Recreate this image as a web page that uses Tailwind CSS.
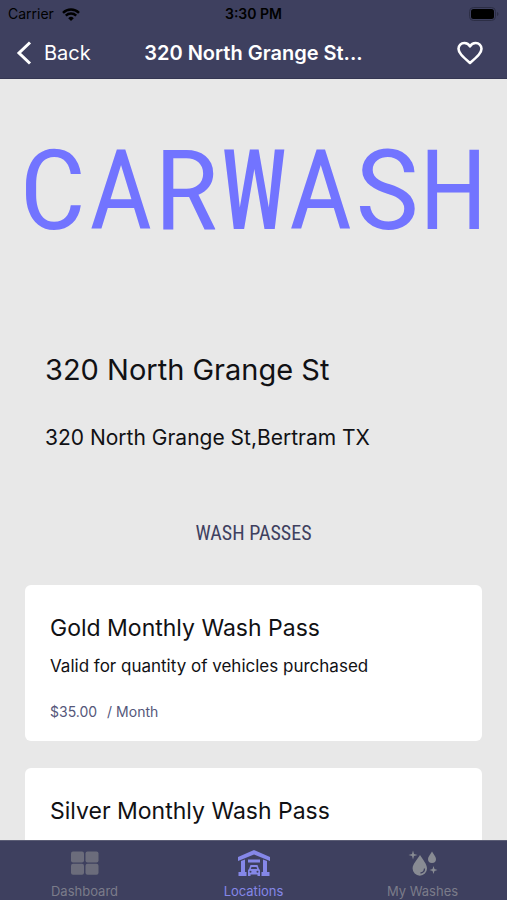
<!DOCTYPE html>
<html lang="en">
<head>
  <meta charset="UTF-8" />
  <meta name="viewport" content="width=device-width, initial-scale=1.0"/>
  <title>320 North Grange St | Carwash</title>
  <script src="https://cdn.jsdelivr.net/npm/@tailwindcss/browser@4"></script>
</head>
<body class="bg-[#e8e8e8] h-screen flex flex-col overflow-hidden font-['Inter',sans-serif] text-[#111114]">

<!-- Header -->
<header class="shrink-0 bg-[#3e405f] border-b border-[#343652]">
  <!-- Status bar -->
  <div class="grid grid-cols-3 items-center h-7 px-2 text-sm text-black">
    <div class="flex items-center gap-2">
      <span>Carrier</span>
      <svg class="w-[18px] h-[13px]" viewBox="0 0 18 13" fill="none" stroke="currentColor" stroke-width="2.4">
        <path d="M1 4.8a11.3 11.3 0 0 1 16 0M3.8 7.6a7.4 7.4 0 0 1 10.4 0" />
        <path d="M9 13L6.2 10.2a4 4 0 0 1 5.6 0z" fill="currentColor" stroke="none" />
      </svg>
    </div>
    <span class="text-center font-semibold">3:30 PM</span>
    <svg class="justify-self-end w-[30px] h-[14px]" viewBox="0 0 30 14">
      <rect x="0.5" y="0.5" width="26" height="13" rx="4" fill="none" stroke="#2c2e45" />
      <rect x="2" y="2" width="23" height="10" rx="2.5" fill="#000" />
      <path d="M28 5v4q1.500-.5 1.500-2t-1.500-2z" fill="#2c2e45" />
    </svg>
  </div>

  <!-- Navigation -->
  <nav class="flex items-center justify-between h-[50px] px-4 text-white">
    <a href="#" class="w-28 flex items-center gap-3 text-xl">
      <svg class="w-4 h-6" viewBox="0 0 16 24" fill="none" stroke="currentColor" stroke-width="3">
        <path d="M14 1.500L3 12l11 10.500" />
      </svg>
      Back
    </a>
    <h1 class="text-xl font-semibold">320 North Grange St...</h1>
    <div class="w-28 flex justify-end pr-2">
      <button type="button" aria-label="Add to favorites">
        <svg class="block w-[26px] h-6" viewBox="0 0 26 24" fill="none" stroke="currentColor" stroke-width="2.600" stroke-linejoin="round">
          <path d="M13 22C5 15 1.500 11.800 1.500 7.800A5.800 5.800 0 0 1 7.400 2C10 2 12 3.500 13 5.300C14 3.500 16 2 18.600 2A5.800 5.800 0 0 1 24.500 7.800C24.500 11.800 21 15 13 22z" />
        </svg>
      </button>
    </div>
  </nav>
</header>

<!-- Location -->
<main class="flex-1 min-h-0 overflow-hidden">
  <div class="pt-13 text-center whitespace-nowrap font-['Roboto_Mono','DejaVu_Sans_Mono',monospace] text-[111px] leading-[110px] text-[#7274ff]">CARWASH</div>

  <section class="mt-[109px] px-[45px]">
    <h2 class="text-[29px] leading-10">320 North Grange St</h2>
    <p class="mt-8 text-[21px] leading-8">320 North Grange St,Bertram TX</p>
  </section>

  <!-- Wash passes -->
  <section class="mt-[63px] px-[25px]">
    <h3 class="text-center font-['Liberation_Sans_Narrow','Roboto_Condensed','Roboto',sans-serif] text-xl leading-8 text-[#3e405f]">WASH PASSES</h3>
    <div class="mt-9 space-y-[27px]">
      <article class="min-h-[156px] px-[25px] pt-[25px] bg-white rounded-md">
        <h4 class="text-[23px] leading-9">Gold Monthly Wash Pass</h4>
        <p class="mt-1.5 text-[17px] leading-7">Valid for quantity of vehicles purchased</p>
        <p class="mt-5 flex gap-2.5 text-sm leading-6 text-[#55577a]"><span>$35.00</span><span>/ Month</span></p>
      </article>
      <article class="min-h-[156px] px-[25px] pt-[25px] bg-white rounded-md">
        <h4 class="text-[23px] leading-9">Silver Monthly Wash Pass</h4>
      </article>
    </div>
  </section>
</main>

<!-- Tab bar -->
<nav class="shrink-0 h-[60px] grid grid-cols-3 bg-[#3e405f] border-t border-[#5b5d75] text-[13px] leading-4 text-[#7b7c8a]">
  <a href="#" class="flex flex-col items-center gap-1.5 pt-2">
    <svg class="w-[30px] h-7" viewBox="0 0 30 28" fill="#6b6c7b">
      <rect x="1" y="2.500" width="13" height="11" rx="2" />
      <rect x="15.500" y="2.500" width="13" height="11" rx="2" />
      <rect x="1" y="14.800" width="13" height="11" rx="2" />
      <rect x="15.500" y="14.800" width="13" height="11" rx="2" />
    </svg>
    Dashboard
  </a>
  <a href="#" class="flex flex-col items-center gap-1.5 pt-2 text-[#8587e8]">
    <svg class="w-[34px] h-7" viewBox="0 0 34 28" fill="currentColor">
      <path d="M17 1L33 8v4L17 5.500L1 12V8z" />
      <path d="M4 12l4-1.500V23h1.500v4H1.500v-4H4zM30 12l-4-1.500V23h-1.500v4h8v-4H30z" />
      <rect x="11" y="10.500" width="12" height="3" />
      <path d="M13.500 16h7l1.500 4q1 .5 1 1.500V27h-2.500v-1.500h-7V27H11v-5.500q0-1 1-1.500zM14.500 18l-.7 2h6.400l-.7-2z" fill-rule="evenodd" />
      <g fill="#3e405f"><circle cx="13.500" cy="22.800" r="1" /><circle cx="20.500" cy="22.800" r="1" /></g>
    </svg>
    Locations
  </a>
  <a href="#" class="flex flex-col items-center gap-1.5 pt-2">
    <svg class="w-[30px] h-7" viewBox="0 0 30 28" fill="#888b93">
      <path d="M12 6C15 11 19 15 19 19.500A7.200 7.200 0 0 1 4.600 19.500C4.600 15 9 11 12 6z" />
      <path d="M24 2.500C25.500 5.500 28 7.500 28 10A4 4 0 0 1 20 10C20 7.500 22.500 5.500 24 2.500z" />
      <path d="M5 1.500L6 5l3.500 1L6 7l-1 3.500L4 7L.5 6L4 5zM25.500 17l1 3 3 1-3 1-1 3-1-3-3-1 3-1z" />
      <path d="M16.500 19.500q0 4-4 4.500" fill="none" stroke="#3e405f" stroke-width="1.300" />
    </svg>
    My Washes
  </a>
</nav>

</body>
</html>
